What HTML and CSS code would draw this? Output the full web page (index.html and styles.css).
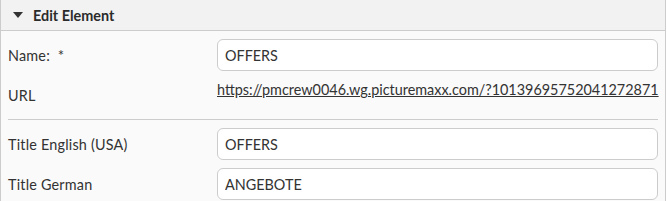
FILE: index.html
```html
<!DOCTYPE html>
<html lang="en">
  <head>
    <meta charset="UTF-8" />
    <meta name="viewport" content="width=device-width, initial-scale=1.0" />
    <link rel="stylesheet" href="styles.css">
    <title>Edit Element</title>
  </head>
  <body>
    <div class="panel">
      <div class="panel-head">
        <span class="caret"></span>
        <span class="panel-title">Edit Element</span>
      </div>
      <div class="panel-body">
        <div class="form-row">
          <label class="form-label" for="name">Name: <span class="req">*</span></label>
          <input class="form-input" type="text" id="name" value="OFFERS" />
        </div>
        <div class="form-row">
          <span class="form-label">URL</span>
          <a class="form-link" href="#">https://pmcrew0046.wg.picturemaxx.com/?10139695752041272871</a>
        </div>
        <hr class="divider" />
        <div class="form-row">
          <label class="form-label" for="title-en">Title English (USA)</label>
          <input class="form-input" type="text" id="title-en" value="OFFERS" />
        </div>
        <div class="form-row">
          <label class="form-label" for="title-de">Title German</label>
          <input class="form-input" type="text" id="title-de" value="ANGEBOTE" />
        </div>
      </div>
    </div>
  </body>
</html>
```

FILE: styles.css
```css
body {
  margin: 0;
  font-family: Lato, "Open Sans", sans-serif;
  font-size: 14.4px;
  color: #333;
  background: #fff;
}
.panel {
  width: 666px;
  box-sizing: border-box;
  border-left: 1px solid #ccc;
  border-right: 1px solid #ccc;
  background: #fafafa;
}
.panel-head {
  height: 30px;
  display: flex;
  align-items: center;
  padding-left: 12px;
  background: #f2f2f2;
  border-bottom: 1px solid #ccc;
}
.caret {
  width: 0;
  height: 0;
  border-left: 5px solid transparent;
  border-right: 5px solid transparent;
  border-top: 6px solid #333;
  margin-right: 10px;
}
.panel-title {
  font-weight: bold;
  font-size: 14.4px;
  color: #2b2b2b;
}
.panel-body {
  display: flex;
  flex-direction: column;
  gap: 8px;
  padding: 8px 7px 8px 7px;
}
.form-row {
  display: grid;
  grid-template-columns: 209px 1fr;
  align-items: center;
  min-height: 32px;
}
.form-label {
  font-size: 14.4px;
  letter-spacing: 0.2px;
}
.req {
  margin-left: 4px;
  font-size: 15px;
}
.form-input {
  height: 32px;
  box-sizing: border-box;
  border: 1px solid #ccc;
  border-radius: 6px;
  background: #fff;
  padding: 0 7px;
  font: inherit;
  color: #333;
}
.form-link {
  align-self: start;
  padding-top: 2px;
  color: #333;
  text-decoration: underline;
  white-space: nowrap;
}
.divider {
  margin: 0;
  border: 0;
  border-top: 1px solid #ccc;
}
```
